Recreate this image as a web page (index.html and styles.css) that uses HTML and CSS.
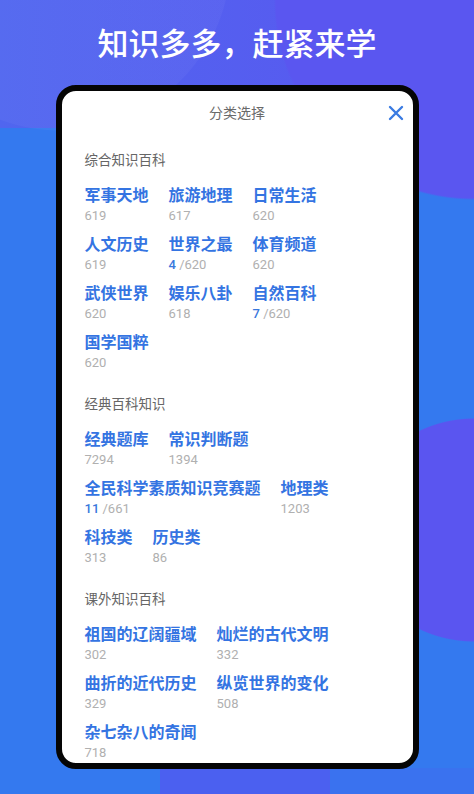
FILE: index.html
```html
<!DOCTYPE html>
<html lang="zh-CN">
<head>
    <meta charset="UTF-8">
    <meta name="viewport" content="width=device-width, initial-scale=1.0">
    <title>分类选择</title>
    <link rel="stylesheet" href="styles.css">
</head>
<body>
    <h1 class="slogan">知识多多，赶紧来学</h1>

    <div class="phone">
        <div class="sheet-header">
            <span></span>
            <span class="sheet-title">分类选择</span>
            <button class="close" aria-label="关闭">
                <svg width="16" height="16" viewBox="0 0 16 16">
                    <path d="M2 2 L14 14 M14 2 L2 14" stroke="#3a7be2" stroke-width="2.4" stroke-linecap="round" fill="none"/>
                </svg>
            </button>
        </div>

        <div class="sheet-body">
            <section class="group">
                <h2>综合知识百科</h2>
                <div class="items">
                    <div class="item"><div class="name">军事天地</div><div class="count">619</div></div>
                    <div class="item"><div class="name">旅游地理</div><div class="count">617</div></div>
                    <div class="item"><div class="name">日常生活</div><div class="count">620</div></div>
                    <div class="item"><div class="name">人文历史</div><div class="count">619</div></div>
                    <div class="item"><div class="name">世界之最</div><div class="count"><b>4</b> /620</div></div>
                    <div class="item"><div class="name">体育频道</div><div class="count">620</div></div>
                    <div class="item"><div class="name">武侠世界</div><div class="count">620</div></div>
                    <div class="item"><div class="name">娱乐八卦</div><div class="count">618</div></div>
                    <div class="item"><div class="name">自然百科</div><div class="count"><b>7</b> /620</div></div>
                    <div class="item"><div class="name">国学国粹</div><div class="count">620</div></div>
                </div>
            </section>

            <section class="group">
                <h2>经典百科知识</h2>
                <div class="items">
                    <div class="item"><div class="name">经典题库</div><div class="count">7294</div></div>
                    <div class="item"><div class="name">常识判断题</div><div class="count">1394</div></div>
                    <div class="item"><div class="name">全民科学素质知识竞赛题</div><div class="count"><b>11</b> /661</div></div>
                    <div class="item"><div class="name">地理类</div><div class="count">1203</div></div>
                    <div class="item"><div class="name">科技类</div><div class="count">313</div></div>
                    <div class="item"><div class="name">历史类</div><div class="count">86</div></div>
                </div>
            </section>

            <section class="group">
                <h2>课外知识百科</h2>
                <div class="items">
                    <div class="item"><div class="name">祖国的辽阔疆域</div><div class="count">302</div></div>
                    <div class="item"><div class="name">灿烂的古代文明</div><div class="count">332</div></div>
                    <div class="item"><div class="name">曲折的近代历史</div><div class="count">329</div></div>
                    <div class="item"><div class="name">纵览世界的变化</div><div class="count">508</div></div>
                    <div class="item"><div class="name">杂七杂八的奇闻</div><div class="count">718</div></div>
                </div>
            </section>
        </div>
    </div>
</body>
</html>
```

FILE: styles.css
```css
html, body {
    height: 100%;
}
body {
    margin: 0;
    overflow: hidden;
    font-family: Roboto, "Noto Sans CJK SC", sans-serif;
    background-color: #3479ef;
    background-image:
        radial-gradient(circle at 60px -40px, rgba(255, 255, 255, 0.035) 0 170px, transparent 171px),
        radial-gradient(ellipse 120px 112px at 474px 530px, #5a55f0 99%, transparent 100%),
        radial-gradient(ellipse 200px 200px at 474px 0, #5a56f0 99%, transparent 100%),
        linear-gradient(90deg, #3479ef 0 160px, #4b60f0 160px 330px, #3a72ef 330px),
        linear-gradient(90deg, #5066ef, #5a56f0);
    background-size: 100% 100%, 100% 100%, 100% 100%, 100% 26px, 100% 128px;
    background-position: 0 0, 0 0, 0 0, 0 768px, 0 0;
    background-repeat: no-repeat;
}
.slogan {
    margin: 0;
    padding-top: 25px;
    height: 40px;
    line-height: 40px;
    margin-bottom: 20px;
    text-align: center;
    color: #fff;
    font-size: 31px;
    font-weight: 500;
}
.phone {
    width: 351px;
    height: 672px;
    margin: 0 auto;
    border: 6px solid #050505;
    border-radius: 20px;
    background: #fff;
    overflow: hidden;
}
.sheet-header {
    display: grid;
    grid-template-columns: 1fr auto 1fr;
    align-items: center;
    padding: 12px 9px 0 9px;
    height: 20px;
}
.sheet-title {
    font-size: 14px;
    line-height: 20px;
    color: #6a6a6a;
}
.close {
    justify-self: end;
    border: 0;
    padding: 0;
    background: none;
    width: 16px;
    height: 16px;
    display: flex;
}
.sheet-body {
    padding: 27px 23px 0 23px;
}
.group {
    margin-bottom: 21px;
}
.group h2 {
    margin: 0 0 16px 0;
    font-size: 13.5px;
    line-height: 20px;
    font-weight: normal;
    color: #666;
}
.items {
    display: flex;
    flex-wrap: wrap;
    column-gap: 20px;
    row-gap: 9px;
}
.item .name {
    font-size: 16px;
    line-height: 20px;
    font-weight: 700;
    color: #3474e2;
    white-space: nowrap;
}
.item .count {
    font-size: 13px;
    line-height: 20px;
    color: #b0b0b0;
}
.item .count b {
    font-weight: 500;
    color: #3a78dc;
}
```
